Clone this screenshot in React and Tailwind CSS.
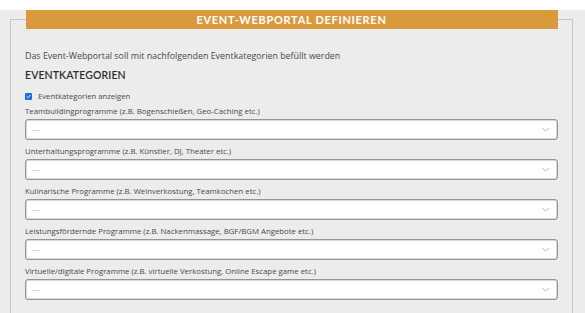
import React from 'react';

const categories = [
  'Teambuildingprogramme (z.B. Bogenschießen, Geo-Caching etc.)',
  'Unterhaltungsprogramme (z.B. Künstler, DJ, Theater etc.)',
  'Kulinarische Programme (z.B. Weinverkostung, Teamkochen etc.)',
  'Leistungsfördernde Programme (z.B. Nackenmassage, BGF/BGM Angebote etc.)',
  'Virtuelle/digitale Programme (z.B. virtuelle Verkostung, Online Escape game etc.)',
];

function SelectBox() {
  return (
    <div className="mt-[3px] h-[21px] flex items-center justify-between rounded-[3px] border border-[#959595] bg-white pl-[6px] pr-[8px] shadow-[inset_0_0_0_0.5px_#b0b0b0]">
      <span className="text-[7px] leading-none text-[#999] tracking-[0.5px]">---</span>
      <svg width="7" height="5" viewBox="0 0 7 5" className="text-[#a5a5a5]">
        <polyline points="0.5,1 3.5,4 6.5,1" fill="none" stroke="currentColor" strokeWidth="0.9" />
      </svg>
    </div>
  );
}

export default function App() {
  return (
    <div className="w-[585px] h-[313px] overflow-hidden bg-white pt-[10px] font-['Open_Sans',sans-serif]">
      <div className="h-[303px] bg-[#ececec] pl-[10px]">
        <fieldset className="w-[563px] h-[320px] border border-[#c6c6c6] px-[14px] bg-[#ececec]">
          <legend className="w-[532px] h-[19px] bg-[#d99a3b] text-center text-white text-[11px] leading-[19px] font-bold tracking-[0.7px] font-['Lato',sans-serif]">
            EVENT-WEBPORTAL DEFINIEREN
          </legend>

          <p className="mt-[21px] h-[12px] text-[8.9px] leading-[12px] text-[#4a4a4a]">
            Das Event-Webportal soll mit nachfolgenden Eventkategorien befüllt werden
          </p>

          <h2 className="mt-[6px] h-[14px] text-[10.5px] leading-[14px] font-semibold tracking-[0.1px] text-[#2f2f2f] font-['Lato',sans-serif]">
            EVENTKATEGORIEN
          </h2>

          <div className="mt-[9px] h-[10px] flex items-center gap-[6px]">
            <span className="w-[7px] h-[7px] flex items-center justify-center rounded-[1px] bg-[#1a6fe0]">
              <svg width="5" height="5" viewBox="0 0 5 5">
                <polyline points="0.8,2.6 2,3.8 4.3,1" fill="none" stroke="white" strokeWidth="0.9" />
              </svg>
            </span>
            <span className="text-[7.7px] leading-[10px] text-[#4a4a4a]">Eventkategorien anzeigen</span>
          </div>

          <div className="mt-[5px] flex flex-col gap-[6px]">
            {categories.map((label) => (
              <div key={label}>
                <div className="h-[10px] text-[7.8px] leading-[10px] text-[#4a4a4a]">{label}</div>
                <SelectBox />
              </div>
            ))}
          </div>
        </fieldset>
      </div>
    </div>
  );
}
